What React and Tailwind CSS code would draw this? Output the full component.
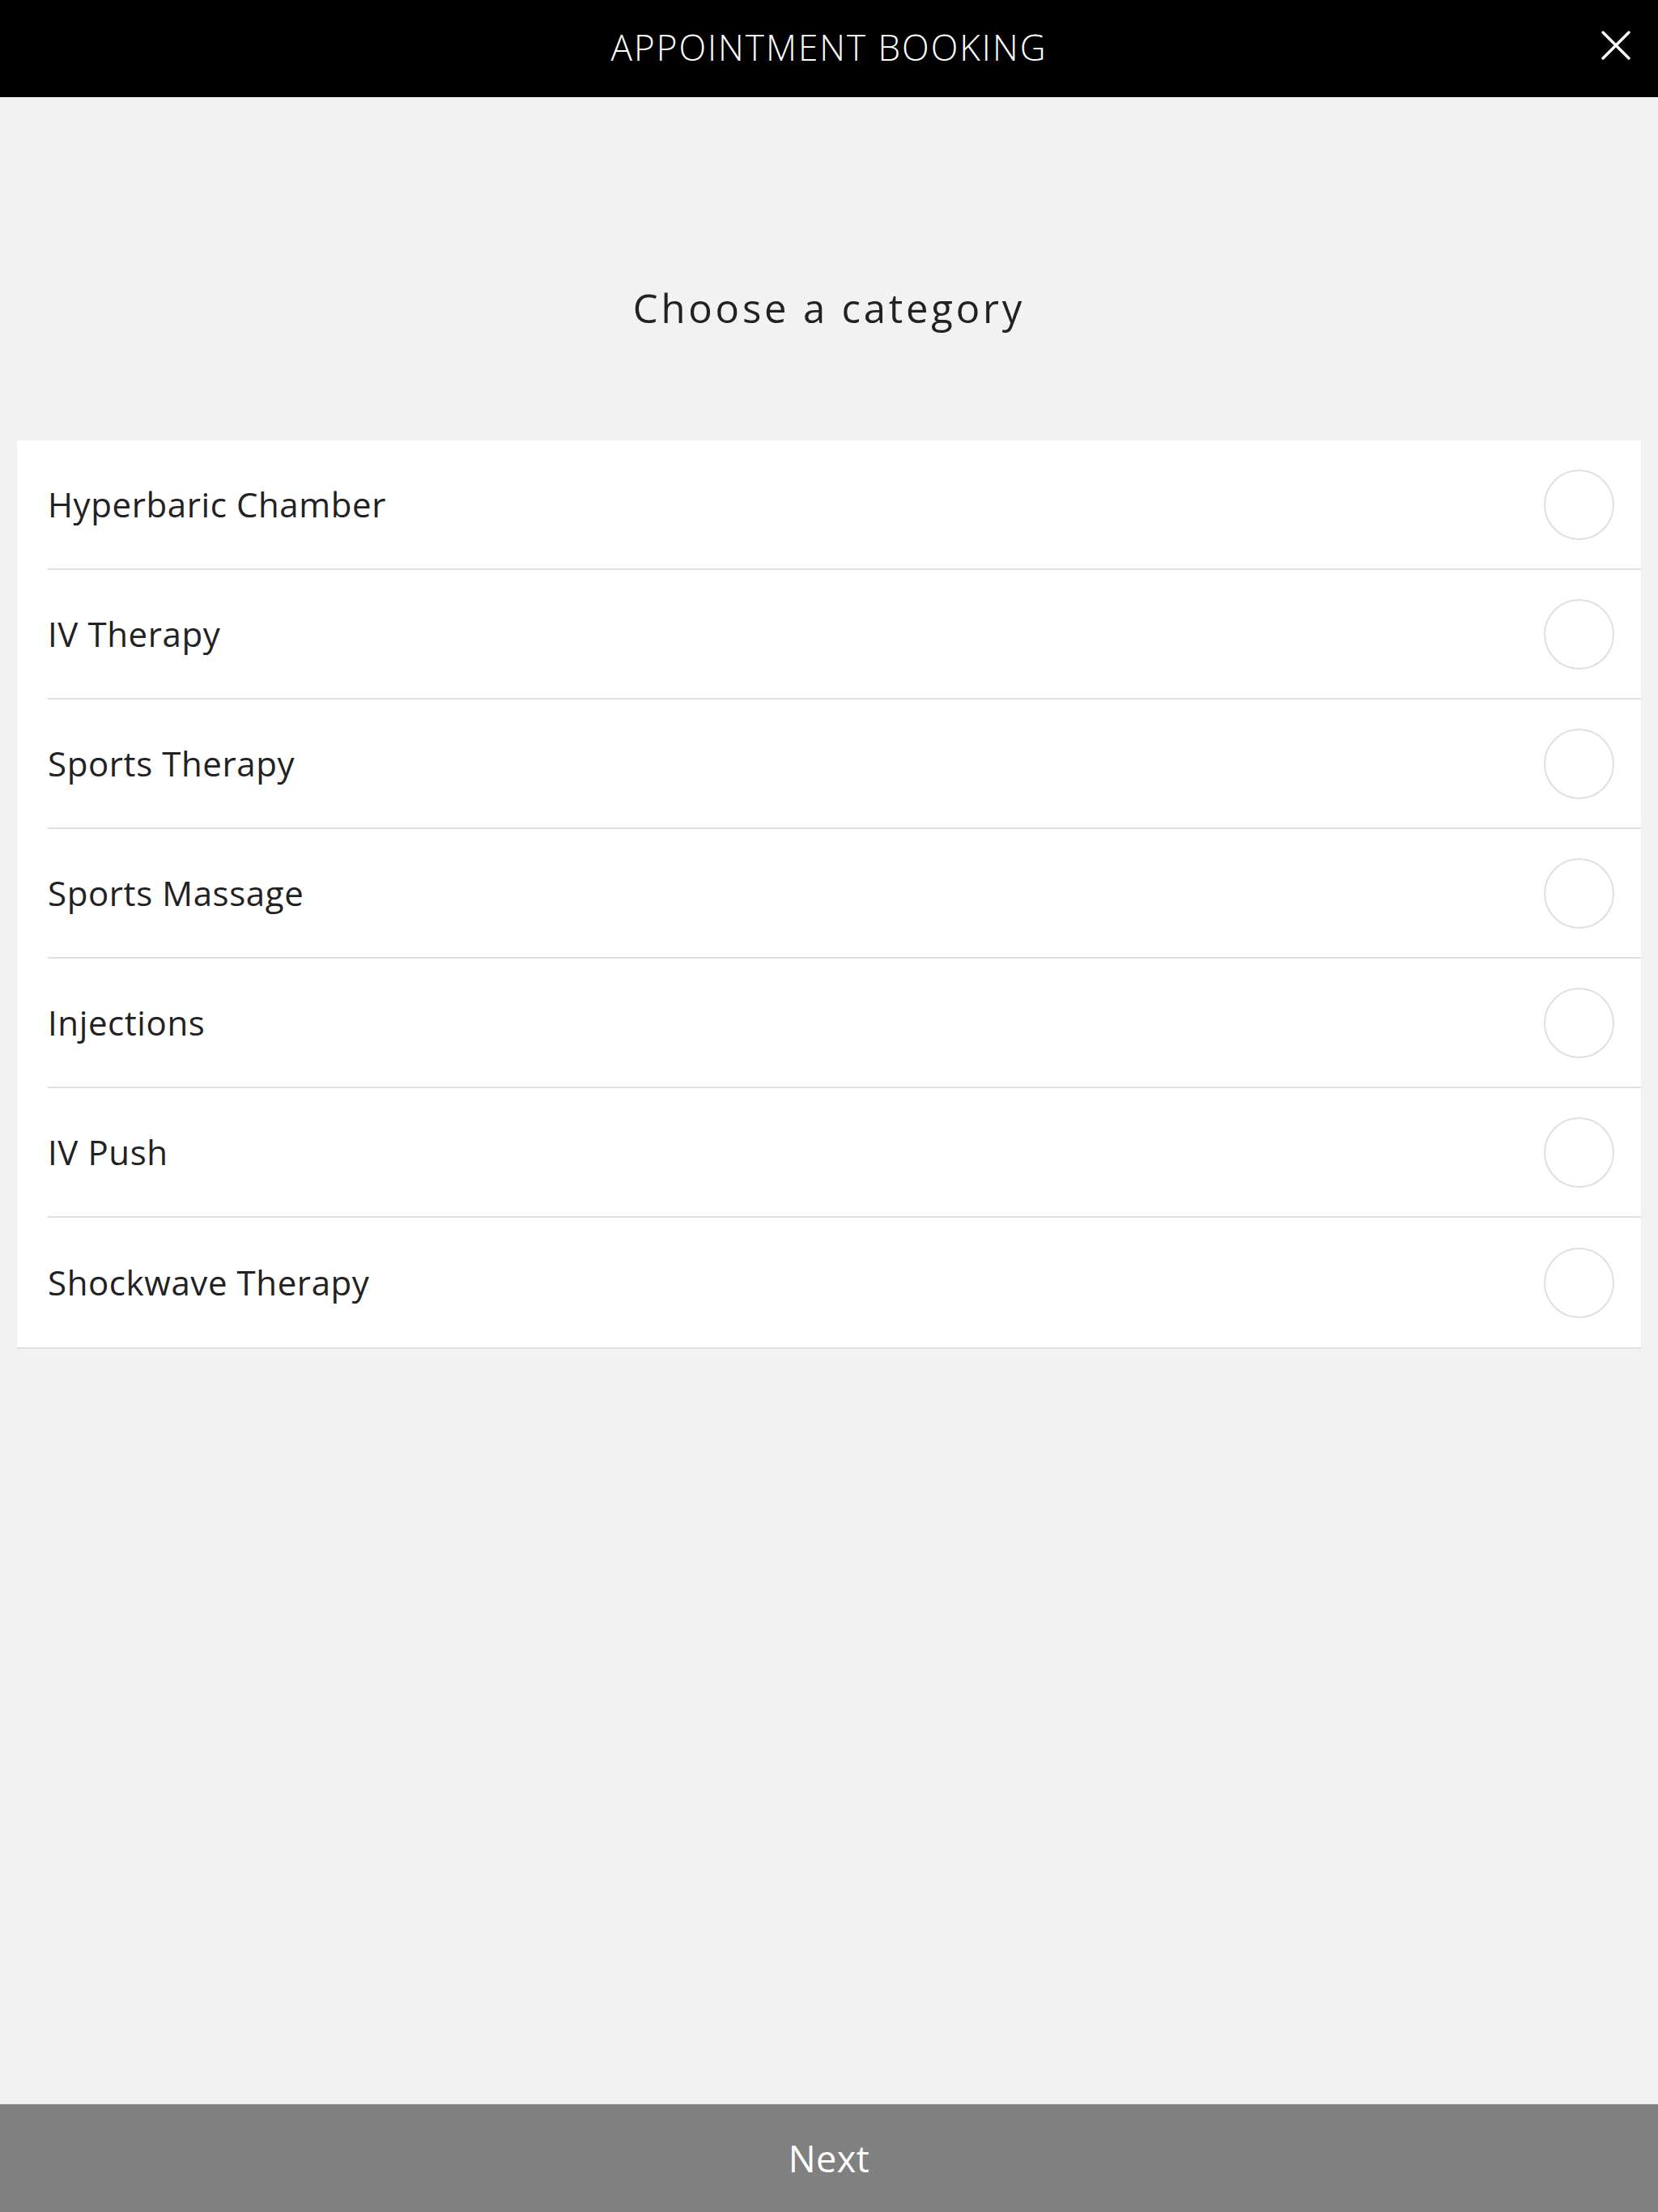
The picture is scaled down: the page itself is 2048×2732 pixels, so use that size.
import React from "react";

const items = [
  "Hyperbaric Chamber",
  "IV Therapy",
  "Sports Therapy",
  "Sports Massage",
  "Injections",
  "IV Push",
  "Shockwave Therapy",
];

export default function App() {
  return (
    <div
      className="min-h-[2732px] h-[2732px] flex flex-col bg-[#f2f2f2] text-[#222]"
      style={{ fontFamily: '"Open Sans", "Noto Sans", sans-serif' }}
    >
      <header className="relative h-[120px] shrink-0 bg-black flex items-center justify-center">
        <h1 className="text-white text-[44px] font-light leading-none tracking-[2px] -mt-[4px]">
          APPOINTMENT BOOKING
        </h1>
        <button className="absolute right-[34px] top-[38px] w-[36px] h-[36px]">
          <svg viewBox="0 0 36 36" width="36" height="36">
            <path d="M2 2 L34 34 M34 2 L2 34" stroke="white" strokeWidth="3.5" strokeLinecap="round" />
          </svg>
        </button>
      </header>

      <div className="pt-[234px] pb-[138px] text-center">
        <h2 className="text-[49px] leading-[52px] tracking-[3.8px] font-normal">Choose a category</h2>
      </div>

      <div className="mx-[21px] bg-white border-b-2 border-[#e0e0e0]">
        {items.map((label, i) => (
          <div key={label} className="h-[160px] pl-[38px] flex">
            <div
              className={
                "flex-1 flex items-center justify-between pr-[33px] " +
                (i < items.length - 1 ? "border-b-2 border-[#e0e0e0]" : "")
              }
            >
              <span className="text-[42px] leading-none tracking-[0.6px] text-[#222]">{label}</span>
              <span className="w-[87px] h-[87px] rounded-full border-2 border-[#e0e0e0]" />
            </div>
          </div>
        ))}
      </div>

      <div className="flex-1" />

      <button className="h-[134px] shrink-0 w-full bg-[#808080] text-white text-[45px] tracking-[0.5px] border-t border-[#e6e6e6]">
        Next
      </button>
    </div>
  );
}
